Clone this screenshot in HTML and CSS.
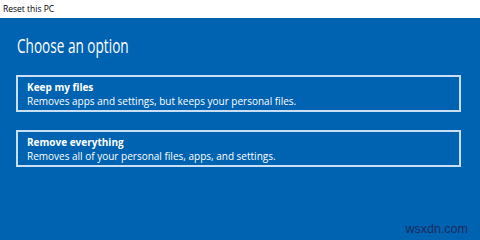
FILE: index.html
```html
<!DOCTYPE html>
<html lang="en">
<head>
  <meta charset="UTF-8" />
  <title>Reset this PC</title>
  <link rel="stylesheet" href="styles.css">
</head>
<body>
  <div class="window">
    <div class="title-bar">Reset this PC</div>

    <div class="content">
      <h1>Choose an option</h1>

      <div class="option">
        <div class="option-title">Keep my files</div>
        <div class="option-desc">Removes apps and settings, but keeps your personal files.</div>
      </div>

      <div class="option">
        <div class="option-title">Remove everything</div>
        <div class="option-desc">Removes all of your personal files, apps, and settings.</div>
      </div>
    </div>

    <div class="watermark">wsxdn.com</div>
  </div>
</body>
</html>
```

FILE: styles.css
```css
body {
  margin: 0;
  font-family: "Open Sans", "Noto Sans", sans-serif;
  width: 480px;
  height: 240px;
  overflow: hidden;
}

.window {
  position: relative;
  height: 240px;
  display: flex;
  flex-direction: column;
  background: #0063b1;
}

.title-bar {
  height: 18px;
  background: #fff;
  color: #000;
  font-size: 8.5px;
  line-height: 17px;
  padding-left: 3px;
}

.content {
  flex: 1;
  padding: 15px 19px 0 16px;
  color: #fff;
}

.content h1 {
  margin: 0 0 16px 1px;
  font-size: 20px;
  font-weight: 400;
  line-height: 26px;
  white-space: nowrap;
  transform: scaleX(0.68);
  transform-origin: left center;
}

.option {
  border: 2px solid #c8def2;
  padding: 3px 9px 2px;
  margin-bottom: 18px;
  font-size: 10px;
  line-height: 14px;
}

.option-title {
  font-weight: 700;
}

.watermark {
  position: absolute;
  right: 12px;
  bottom: 4px;
  font-family: "Liberation Sans", sans-serif;
  font-size: 12.5px;
  color: #1b2a5c;
}
```
